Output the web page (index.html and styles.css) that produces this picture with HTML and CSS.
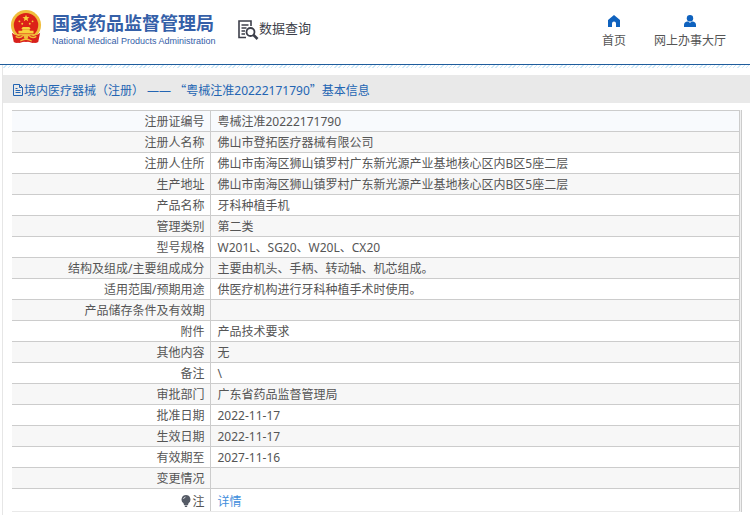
FILE: index.html
```html
<!DOCTYPE html>
<html lang="zh-CN">
<head>
<meta charset="utf-8">
<meta name="viewport" content="width=device-width, initial-scale=1">
<title>国家药品监督管理局 数据查询</title>
<link rel="stylesheet" href="styles.css">
</head>
<body>
<header class="header">
  <a class="brand" href="#">
    <svg class="emblem" viewBox="0 0 34 36" aria-hidden="true">
      <path d="M6 26h22l1 7-5 2-7-2-7 2-5-2z" fill="#d8201c"/>
      <circle cx="17" cy="16" r="16" fill="#f0bd3c"/>
      <circle cx="17" cy="16" r="13" fill="#dc2118"/>
      <path d="M17 5l1 2.500 2.700.1-2.100 1.700.7 2.600-2.300-1.500-2.300 1.500.7-2.600-2.100-1.700 2.700-.1z" fill="#f8d13c"/>
      <g fill="#f5c83a"><circle cx="10" cy="12" r="1"/><circle cx="13" cy="14.500" r="1"/><circle cx="21" cy="14.500" r="1"/><circle cx="24" cy="12" r="1"/></g>
      <path d="M12 20l1.500-2h7l1.500 2zM13 20.500h8v1.500h4v3H9v-3h4z" fill="#f8d13c"/>
      <path d="M6 25.500h22v1.500H6z" fill="#f0bd3c"/>
      <path d="M2 24c4 4 10 4 12 3h6c2 1 8 1 12-3l-2 10c-3 2-6 1-8-1l-5 1-5-1c-2 2-5 3-8 1z" fill="#d8201c"/>
      <path d="M6 28c3 2 6 1 8-1h6c2 2 5 3 8 1M11 33c2-1 3-2 6-2s4 1 6 2" fill="none" stroke="#f3bd35" stroke-width="1.400"/>
      <circle cx="17" cy="28.500" r="2.300" fill="#f0bd3c"/>
    </svg>
    <span class="brand-text">
      <span class="brand-cn">国家药品监督管理局</span>
      <span class="brand-en">National Medical Products Administration</span>
    </span>
  </a>
  <a class="query" href="#">
    <svg class="query-icon" viewBox="0 0 21 20" aria-hidden="true" fill="none" stroke="#3d3f4a">
      <path d="M8 17.500H1V1h12v5" stroke-width="1.600"/>
      <path d="M3.500 5h7M3.500 8h5M3.500 11h3.500M3.500 14h3.500" stroke-width="1.300"/>
      <circle cx="12.500" cy="12" r="4" stroke-width="1.800"/>
      <path d="M15.500 15l4 4" stroke-width="2.600"/>
    </svg>
    <span>数据查询</span>
  </a>
  <nav class="nav">
    <a class="nav-link" href="#">
      <svg class="nav-icon" viewBox="0 0 12 12" aria-hidden="true"><path d="M6 0l6 5v7H8V8.500a2 2 0 0 0-4 0V12H0V5z" fill="#0f62be"/></svg>
      <span>首页</span>
    </a>
    <a class="nav-link" href="#">
      <svg class="nav-icon" viewBox="0 0 12 12" aria-hidden="true"><circle cx="6" cy="3.200" r="3.200" fill="#0f62be"/><path d="M0 12V10Q0 7 3 6.500h1.500L6 8l1.500-1.500H9q3 .5 3 3.500v2z" fill="#0f62be"/></svg>
      <span>网上办事大厅</span>
    </a>
  </nav>
</header>
<main class="panel">
  <h1 class="title">
    <svg class="title-icon" viewBox="0 0 10 12" aria-hidden="true" fill="none" stroke="#2365b3"><path d="M.5.500h6l3 3v8h-9zM6.500.500v3h3M2.500 4.500h2M2.500 6.500h5M2.500 8.500h5"/></svg>
    <span>境内医疗器械（注册） —— <span class="quote">“</span>粤械注准20222171790<span class="quote">”</span>基本信息</span>
  </h1>
  <div class="frame">
    <table class="info">
      <tbody>
        <tr><th scope="row">注册证编号</th><td>粤械注准20222171790</td></tr>
        <tr><th scope="row">注册人名称</th><td>佛山市登拓医疗器械有限公司</td></tr>
        <tr><th scope="row">注册人住所</th><td>佛山市南海区狮山镇罗村广东新光源产业基地核心区内B区5座二层</td></tr>
        <tr><th scope="row">生产地址</th><td>佛山市南海区狮山镇罗村广东新光源产业基地核心区内B区5座二层</td></tr>
        <tr><th scope="row">产品名称</th><td>牙科种植手机</td></tr>
        <tr><th scope="row">管理类别</th><td>第二类</td></tr>
        <tr><th scope="row">型号规格</th><td>W201L、SG20、W20L、CX20</td></tr>
        <tr><th scope="row">结构及组成/主要组成成分</th><td>主要由机头、手柄、转动轴、机芯组成。</td></tr>
        <tr><th scope="row">适用范围/预期用途</th><td>供医疗机构进行牙科种植手术时使用。</td></tr>
        <tr><th scope="row">产品储存条件及有效期</th><td></td></tr>
        <tr><th scope="row">附件</th><td>产品技术要求</td></tr>
        <tr><th scope="row">其他内容</th><td>无</td></tr>
        <tr><th scope="row">备注</th><td>\</td></tr>
        <tr><th scope="row">审批部门</th><td>广东省药品监督管理局</td></tr>
        <tr><th scope="row">批准日期</th><td>2022-11-17</td></tr>
        <tr><th scope="row">生效日期</th><td>2022-11-17</td></tr>
        <tr><th scope="row">有效期至</th><td>2027-11-16</td></tr>
        <tr><th scope="row">变更情况</th><td></td></tr>
        <tr class="note"><th scope="row"><svg class="bulb" viewBox="0 0 10 12" aria-hidden="true"><path d="M5 0a4.500 4.500 0 0 1 2.500 8.200L7 10H3L2.500 8.200A4.500 4.500 0 0 1 5 0zM3.500 10.500h3L6 12H4z" fill="#555b66"/><path d="M2.500 4q.3-1.700 2-2" fill="none" stroke="#d5d8dd"/></svg>注</th><td><a href="#">详情</a></td></tr>
      </tbody>
    </table>
  </div>
</main>
</body>
</html>
```
FILE: styles.css
```css
* {
  box-sizing: border-box;
}

body {
  display: flex;
  flex-direction: column;
  min-height: 100vh;
  margin: 0;
  background: #fff;
  color: #555;
  font: 12px/20px "Noto Sans", "Noto Sans CJK SC", sans-serif;
}

a {
  color: inherit;
  text-decoration: none;
}

svg {
  display: block;
  flex: none;
}

.header {
  display: flex;
  align-items: flex-start;
  height: 65px;
  padding: 9px 24px 0 10px;
  border-bottom: 1px solid #1f5c9c;
}

.brand {
  display: flex;
  gap: 10px;
  color: #3560a8;
}

.emblem {
  width: 32px;
  height: 36px;
}

.brand-text {
  display: flex;
  flex-direction: column;
  width: 160px;
  padding-top: 2px;
  white-space: nowrap;
}

.brand-cn {
  font-size: 18px;
  font-weight: 700;
  line-height: 24px;
}

.brand-en {
  font: 400 9px/12px "Liberation Sans", Arial, sans-serif;
}

.query {
  display: flex;
  margin-left: 26px;
  padding-top: 9px;
  color: #3d3f4a;
  font-size: 13px;
  white-space: nowrap;
}

.query-icon {
  width: 21px;
  height: 20px;
  margin-top: 2px;
}

.nav {
  display: flex;
  gap: 28px;
  margin-left: auto;
  padding-top: 6px;
}

.nav-link {
  display: flex;
  flex-direction: column;
  align-items: center;
  gap: 4px;
}

.nav-icon {
  width: 12px;
  height: 12px;
}

.panel {
  flex: 1;
  margin-left: 2px;
  padding-top: 10px;
  border-left: 1px solid #e6e6e6;
  background: repeating-linear-gradient(135deg, #fff 0 2px, #cfe9f8 2px 3px) top / 100% 3px no-repeat;
}

.title {
  display: flex;
  align-items: center;
  gap: 1px;
  height: 28px;
  margin: 0;
  padding: 2px 0 0 10px;
  background: #e9e9e9;
  color: #2365b3;
  font-size: 12px;
  font-weight: 400;
}

.title-icon {
  width: 10px;
  height: 12px;
}

.quote {
  font-family: "Noto Sans CJK SC", sans-serif;
}

.frame {
  margin: 7px 8px 0 9px;
  padding-right: 1px;
  border-right: 1px solid #ccc;
  background: #f0f0f0;
}

.info {
  width: 100%;
  border-collapse: collapse;
  table-layout: fixed;
  background: #fff;
}

.info th,
.info td {
  height: 21px;
  padding: 2px 5px 0 7px;
  border: 1px solid #ccc;
  font-weight: 400;
  line-height: 18px;
}

.info th {
  width: 198px;
  border-left: 0;
  text-align: right;
}

.info tr:nth-child(even) {
  background: #f7f7f7;
}

.info tr:first-child {
  background: #f8fafd;
}

.info .note th,
.info .note td {
  height: 23px;
  padding-top: 4px;
  border-bottom-color: #e9e9e9;
}

.note a {
  color: #3f8edc;
}

.bulb {
  display: inline-block;
  width: 10px;
  height: 12px;
  margin-right: 1px;
  vertical-align: -1px;
}
```
